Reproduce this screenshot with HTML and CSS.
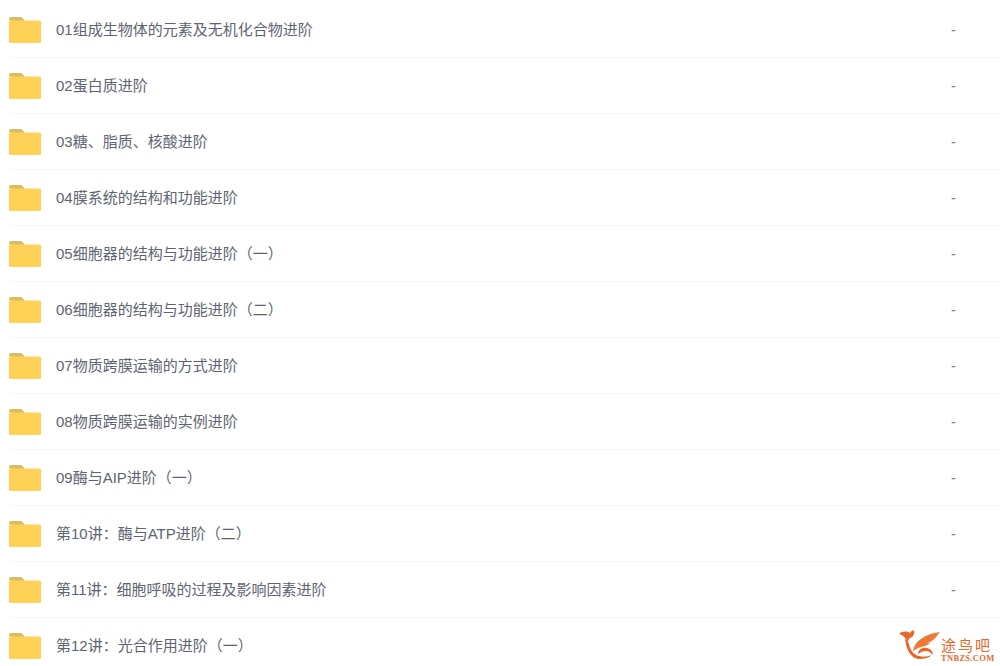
FILE: index.html
```html
<!DOCTYPE html>
<html lang="zh-CN">
<head>
    <meta charset="UTF-8">
    <meta name="viewport" content="width=device-width, initial-scale=1.0">
    <title>文件列表</title>
    <link rel="stylesheet" href="styles.css">
</head>
<body>

<svg class="icon-defs" width="0" height="0">
    <symbol id="folder" viewBox="0 0 32 26">
        <path d="M0 2c0-1.200.8-2 2-2h9.500c1 0 1.700.4 2.300 1.200L15.500 4H2C.8 4 0 3.200 0 2z" fill="#dcbc62"/>
        <rect x="0" y="3.500" width="32" height="22.500" rx="1.500" fill="#ffd157"/>
    </symbol>
</svg>

<ul class="file-list">
    <li class="file-row"><svg class="folder"><use href="#folder"/></svg><span class="file-name">01组成生物体的元素及无机化合物进阶</span><span class="file-size">-</span></li>
    <li class="file-row"><svg class="folder"><use href="#folder"/></svg><span class="file-name">02蛋白质进阶</span><span class="file-size">-</span></li>
    <li class="file-row"><svg class="folder"><use href="#folder"/></svg><span class="file-name">03糖、脂质、核酸进阶</span><span class="file-size">-</span></li>
    <li class="file-row"><svg class="folder"><use href="#folder"/></svg><span class="file-name">04膜系统的结构和功能进阶</span><span class="file-size">-</span></li>
    <li class="file-row"><svg class="folder"><use href="#folder"/></svg><span class="file-name">05细胞器的结构与功能进阶（一）</span><span class="file-size">-</span></li>
    <li class="file-row"><svg class="folder"><use href="#folder"/></svg><span class="file-name">06细胞器的结构与功能进阶（二）</span><span class="file-size">-</span></li>
    <li class="file-row"><svg class="folder"><use href="#folder"/></svg><span class="file-name">07物质跨膜运输的方式进阶</span><span class="file-size">-</span></li>
    <li class="file-row"><svg class="folder"><use href="#folder"/></svg><span class="file-name">08物质跨膜运输的实例进阶</span><span class="file-size">-</span></li>
    <li class="file-row"><svg class="folder"><use href="#folder"/></svg><span class="file-name">09酶与AIP进阶（一）</span><span class="file-size">-</span></li>
    <li class="file-row"><svg class="folder"><use href="#folder"/></svg><span class="file-name">第10讲：酶与ATP进阶（二）</span><span class="file-size">-</span></li>
    <li class="file-row"><svg class="folder"><use href="#folder"/></svg><span class="file-name">第11讲：细胞呼吸的过程及影响因素进阶</span><span class="file-size">-</span></li>
    <li class="file-row"><svg class="folder"><use href="#folder"/></svg><span class="file-name">第12讲：光合作用进阶（一）</span></li>
</ul>

<div class="watermark">
    <svg class="watermark-logo" viewBox="0 0 44 30">
        <path d="M1 4C4 1 9 1 12 3 13 1 15 0 16 1 17 4 15 7 12 8 11 9 10 10 10 12 8 8 5 5 1 4z" fill="#e8672c"/>
        <path d="M7 8C8 9 10 11 11 14 12 20 16 25 21 26 25 27 29 27 33 25 32 28 26 29 20 29 13 28 8 20 7 8z" fill="#e8672c"/>
        <path d="M15 21C16 12 26 4 42 2 39 5 38 8 35 10 33 12 30 13 28 13L32 13C29 16 26 16 23 17 20 18 18 19 15 21z" fill="#ee7a35"/>
        <path d="M20 24C20 20 24 17 29 18 33 19 35 22 35 25 33 23 31 21 28 21 25 21 23 22 20 24z" fill="#e8672c"/>
    </svg>
    <div class="watermark-text">
        <span class="watermark-name">途鸟吧</span>
        <span class="watermark-url">TNBZS.COM</span>
    </div>
</div>

</body>
</html>
```

FILE: styles.css
```css
body {
    margin: 0;
    height: 666px;
    overflow: hidden;
    position: relative;
    background-color: #ffffff;
    font-family: "Liberation Sans", "Noto Sans CJK SC", sans-serif;
}
.icon-defs {
    display: block;
    height: 0;
}
.file-list {
    list-style: none;
    margin: 0;
    padding: 2px 0 0 9px;
}
.file-row {
    display: flex;
    align-items: center;
    height: 52px;
    padding-bottom: 3px;
    border-bottom: 1px solid #f6f6f6;
}
.folder {
    width: 32px;
    height: 26px;
    flex: none;
    margin-top: 4px;
}
.file-name {
    margin-left: 15px;
    font-size: 15px;
    color: #5e6472;
    flex: 1;
}
.file-size {
    width: 49px;
    margin-top: 4px;
    font-size: 14px;
    color: #6f7580;
}
.watermark {
    position: absolute;
    left: 898px;
    top: 630px;
    display: flex;
    align-items: flex-start;
}
.watermark-logo {
    width: 44px;
    height: 30px;
}
.watermark-text {
    display: flex;
    flex-direction: column;
    margin: 8px 0 0 -1px;
    color: #e8672c;
}
.watermark-name {
    font-size: 15px;
    line-height: 16px;
    letter-spacing: 2px;
}
.watermark-url {
    font-family: "Liberation Serif", serif;
    font-size: 8.500px;
    line-height: 8px;
    font-weight: bold;
    letter-spacing: 0.3px;
}
```
